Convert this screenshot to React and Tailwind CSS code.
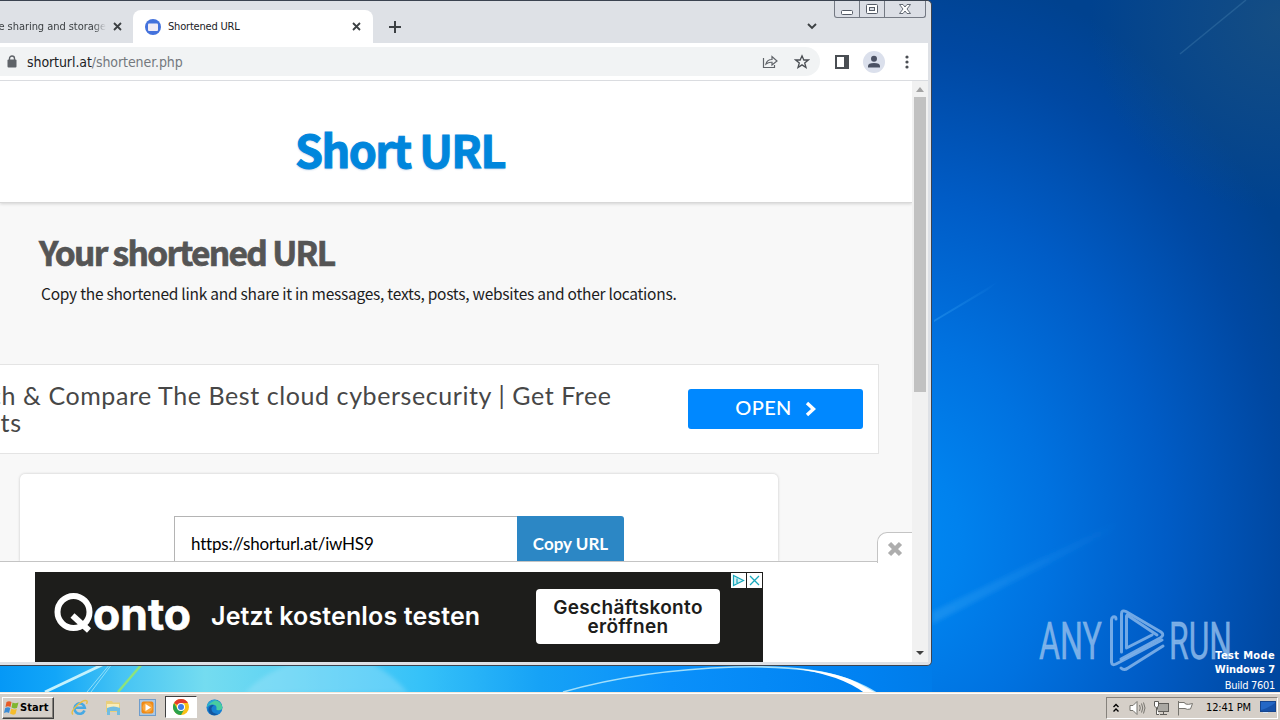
import React from "react";

const quickLaunch = [
  { id: "ie", icon: <IeIcon /> },
  { id: "explorer", icon: <FolderIcon /> },
  { id: "player", icon: <PlayerIcon /> },
  { id: "chrome", icon: <ChromeIcon />, active: true },
  { id: "edge", icon: <EdgeIcon /> },
];

function Wallpaper() {
  return (
    <svg className="absolute inset-0" width="1280" height="720" viewBox="0 0 1280 720">
      <defs>
        <radialGradient id="glow" gradientUnits="userSpaceOnUse" cx="0" cy="0" r="1" gradientTransform="translate(890 540) scale(460 580)">
          <stop offset="0" stopColor="#008af4" />
          <stop offset="0.15" stopColor="#0082ee" />
          <stop offset="0.35" stopColor="#0072e0" />
          <stop offset="0.6" stopColor="#005cc6" />
          <stop offset="0.85" stopColor="#0048a2" />
          <stop offset="1" stopColor="#00428f" />
        </radialGradient>
        <radialGradient id="corner" gradientUnits="userSpaceOnUse" cx="1280" cy="20" r="190">
          <stop offset="0" stopColor="#1a5080" stopOpacity="0.8" />
          <stop offset="1" stopColor="#1a5080" stopOpacity="0" />
        </radialGradient>
        <linearGradient id="strip">
          <stop offset="0" stopColor="#0598f6" />
          <stop offset="0.06" stopColor="#12a6f8" />
          <stop offset="0.13" stopColor="#46c4f4" />
          <stop offset="0.22" stopColor="#74dcf0" />
          <stop offset="0.32" stopColor="#5cd2f4" />
          <stop offset="0.45" stopColor="#36c2f8" />
          <stop offset="0.58" stopColor="#16a2f6" />
          <stop offset="0.72" stopColor="#0a90fa" />
          <stop offset="0.92" stopColor="#0082f2" />
          <stop offset="1" stopColor="#007ce9" />
        </linearGradient>
        <linearGradient id="ray" x1="0" x2="1" y1="1" y2="0">
          <stop offset="0" stopColor="#39a6f4" stopOpacity="0.4" />
          <stop offset="1" stopColor="#39a6f4" stopOpacity="0" />
        </linearGradient>
        <filter id="soft" x="-20%" y="-20%" width="140%" height="140%">
          <feGaussianBlur stdDeviation="2" />
        </filter>
      </defs>
      <rect width="1280" height="720" fill="url(#glow)" />
      <rect x="1000" width="280" height="260" fill="url(#corner)" />
      <rect y="664" width="932" height="29" fill="url(#strip)" />
      <path d="M932 612 L1120 520 L1110 532 L932 624Z" fill="url(#ray)" filter="url(#soft)" />
      <path d="M934 320 L1000 280 L988 290 L934 322Z" fill="url(#ray)" />
      <path d="M1246 0 L1180 54" stroke="#4a86b4" strokeOpacity="0.35" strokeWidth="1.5" />
      <path d="M45 692 L104 664" stroke="#c4f2fd" strokeWidth="3" />
      <path d="M87 692 L110 664 M91 692 L112 664" stroke="#90dffa" strokeWidth="1" />
      <path d="M118 692 L142 664" stroke="#8de37c" strokeWidth="2.5" />
      <path d="M245 693 Q262 674 290 664 L372 664 Q395 676 408 693Z" fill="#b5e9fb" fillOpacity="0.3" filter="url(#soft)" />
      <path d="M563 692 Q640 670 735 667 Q810 665 850 680 Q866 686 878 694" fill="none" stroke="#a2dffb" strokeWidth="1.600" />
      <path d="M790 668 Q835 671 858 683 L878 694 L866 694 Q840 674 790 668Z" fill="#fff" />
    </svg>
  );
}

function Watermark() {
  return (
    <svg className="absolute left-[1036px] top-[608px]" width="200" height="66" viewBox="1036 608 200 66">
      <g fill="#8fbcec" fillOpacity="0.85" stroke="#8fbcec" strokeOpacity="0.5" strokeWidth="0.9" fontFamily="'Liberation Sans Narrow', Roboto, sans-serif" fontSize="52">
        <text x="1039" y="659" textLength="63" lengthAdjust="spacingAndGlyphs">ANY</text>
        <text x="1169" y="659" textLength="63" lengthAdjust="spacingAndGlyphs">RUN</text>
      </g>
      <g fill="none" stroke="#8fbcec" strokeOpacity="0.8" strokeWidth="3" strokeLinejoin="round" strokeLinecap="round">
        <path d="M1116 619 Q1116 616 1113 617 Q1111.500 618 1111.500 620 V662 Q1112 666 1116 664 L1162 640" />
        <path d="M1121.500 652 V614 Q1121.500 609.500 1126 611.500 L1161 632 Q1165 635 1160 638 L1121 659" />
        <path d="M1127 615 L1157 635 M1126.500 616 V648 L1152 635 M1121 668 Q1124 671 1128 668 L1163 646" />
      </g>
    </svg>
  );
}

function WindowButtons() {
  return (
    <div className="flex h-[17px] w-[92px] rounded-b-[3px] border border-t-0 border-[#747983] bg-[#dbdee5]">
      <div className="flex w-[25px] items-center justify-center border-r border-[#747983]">
        <svg width="14" height="14" viewBox="0 0 14 14"><rect x="1.500" y="8.500" width="11" height="4" rx="1" fill="#fff" stroke="#555b66" /></svg>
      </div>
      <div className="flex w-[25px] items-center justify-center border-r border-[#747983]">
        <svg width="14" height="14" viewBox="0 0 14 14" fill="#fff" stroke="#555b66"><rect x="1.500" y="2.500" width="11" height="9" rx="1" /><rect x="4.500" y="5.500" width="5" height="3" fill="#dbdee5" /></svg>
      </div>
      <div className="flex flex-1 items-center justify-center">
        <svg width="14" height="14" viewBox="0 0 14 14"><path d="M1.500 2.500H5L7 5L9 2.500H12.500L9 7L12.500 11.500H9L7 9L5 11.500H1.500L5 7Z" fill="#fff" stroke="#555b66" strokeWidth="0.900" /></svg>
      </div>
    </div>
  );
}

function TabClose() {
  return (
    <svg width="9" height="9" viewBox="0 0 9 9"><path d="M1 1L8 8M8 1L1 8" stroke="#3c4043" strokeWidth="1.800" /></svg>
  );
}

function TabStrip() {
  return (
    <div className="flex h-[42px] shrink-0 bg-[#dee1e6] font-['DejaVu_Sans_Condensed','DejaVu_Sans',sans-serif] text-[11px] text-[#3c4043]">
      <div className="flex w-[133px] items-center pt-[9px]">
        <div className="flex w-[106px] justify-end overflow-hidden whitespace-nowrap pt-[1px] [mask-image:linear-gradient(to_right,black_88%,transparent)]">
          <span className="tracking-[-0.05px]">file sharing and storage</span><span className="w-[5px]" />
        </div>
        <span className="ml-[7px]"><TabClose /></span>
      </div>
      <div className="flex h-[33px] w-[240px] items-center self-end rounded-t-[8px] bg-white pl-[12px]">
        <svg width="16" height="16" viewBox="0 0 16 16"><circle cx="8" cy="8" r="8" fill="#4472dc" /><rect x="3" y="4.500" width="10" height="7.500" rx="1" fill="#f1ecf5" /></svg>
        <span className="ml-[7px] pt-[1px] tracking-[-0.2px] text-[#202124]">Shortened URL</span>
        <span className="ml-auto mr-[12px]"><TabClose /></span>
      </div>
      <div className="flex flex-1 items-center pl-[16px] pt-[9px]">
        <svg width="12" height="12" viewBox="0 0 12 12"><path d="M6 0V12M0 6H12" stroke="#3c4043" strokeWidth="2" /></svg>
      </div>
      <div className="flex w-[27px] items-center pt-[9px]">
        <svg width="10" height="7" viewBox="0 0 10 7"><path d="M1 1L5 5L9 1" fill="none" stroke="#3c4043" strokeWidth="1.900" /></svg>
      </div>
      <WindowButtons />
      <div className="w-[2px]" />
    </div>
  );
}

function Toolbar() {
  return (
    <div className="flex h-[38px] shrink-0 items-center border-b border-[#dadce0] bg-white">
      <div className="flex h-[29px] w-[820px] items-center rounded-r-full bg-[#f1f3f4] pl-[7px] pr-[10px]">
        <svg width="10" height="13" viewBox="0 0 10 13"><rect x="0.500" y="4.500" width="9" height="8" rx="1" fill="#5f6368" /><path d="M2.500 5V3.500A2.500 2.500 0 0 1 7.500 3.500V5" fill="none" stroke="#5f6368" strokeWidth="1.400" /></svg>
        <span className="ml-[10px] pt-[1px] font-['DejaVu_Sans_Condensed','DejaVu_Sans',sans-serif] text-[14px] tracking-[-0.08px] text-[#202124]">
          shorturl.at<span className="text-[#74797e]">/shortener.php</span>
        </span>
        <svg className="ml-auto" width="16" height="16" viewBox="0 0 16 16" fill="none" stroke="#5f6368" strokeWidth="1.200"><path d="M1.500 4V13.500H12.500V11" /><path d="M4 10Q5 5.500 10 5.500V2.500L15 7L10 11V8.300Q6.500 8 4 10Z" /></svg>
        <svg className="ml-[16px]" width="16" height="16" viewBox="0 0 16 16"><path d="M8 1.800L9.800 6H14.300L10.700 8.900L12 13.500L8 10.900L4 13.500L5.300 8.900L1.700 6H6.200Z" fill="none" stroke="#4a4e53" strokeWidth="1.300" /></svg>
      </div>
      <svg className="ml-[15px]" width="14" height="14" viewBox="0 0 14 14"><rect x="1" y="1" width="12" height="12" fill="#fff" stroke="#4a4e53" strokeWidth="2" /><path d="M9 0H14V14H9Z" fill="#4a4e53" /></svg>
      <svg className="ml-[14px]" width="22" height="22" viewBox="0 0 22 22"><circle cx="11" cy="11" r="11" fill="#dbe0ec" /><circle cx="11" cy="7.800" r="3" fill="#4b5163" /><path d="M5 16.500V15Q5 12 11 12T17 15V16.500Z" fill="#4b5163" /></svg>
      <svg className="ml-[19.500px]" width="4" height="14" viewBox="0 0 4 14" fill="#4a4e53"><circle cx="2" cy="2" r="1.600" /><circle cx="2" cy="7" r="1.600" /><circle cx="2" cy="12" r="1.600" /></svg>
    </div>
  );
}

function SearchAd() {
  return (
    <div className="mt-[59px] flex h-[90px] w-[879px] shrink-0 items-center border border-l-0 border-[#e4e4e4] bg-white pr-[15px]">
      <div className="-ml-[61px] w-[680px] whitespace-nowrap text-[25px] leading-[27px] tracking-[0.58px] text-[#474747]">
        <div>Search &amp; Compare The Best cloud cybersecurity | Get Free</div>
        <div>Results</div>
      </div>
      <div className="ml-auto flex h-[40px] w-[175px] items-center justify-center rounded-[3px] bg-[#0088ff] text-[20px] font-medium leading-[24px] tracking-[0.4px] text-white">
        <span className="pb-[4px]">OPEN</span>
        <svg className="ml-[13px]" width="11" height="16" viewBox="0 0 11 16"><path d="M2 2L8.500 8L2 14" fill="none" stroke="#fff" strokeWidth="3.400" /></svg>
      </div>
    </div>
  );
}

function ShortUrlCard() {
  return (
    <div className="ml-[20px] mt-[20px] flex h-[88px] w-[758px] shrink-0 items-end rounded-t-[5px] bg-white pl-[154px] shadow-[0_0_3px_rgba(0,0,0,0.2)]">
      <div className="flex h-[46px]">
        <div className="w-[343px] border border-b-0 border-r-0 border-[#b4b4b4] pl-[16px] pt-[15px] text-[17px] leading-[24px] tracking-[-0.2px] text-black">https://shorturl.at/iwHS9</div>
        <div className="w-[107px] rounded-tr-[3px] bg-[#2c87c5] pt-[16px] text-center text-[17px] font-bold leading-[24px] text-white">Copy URL</div>
      </div>
    </div>
  );
}

function BottomAd() {
  return (
    <div className="absolute bottom-0 left-0 h-[101px] w-full border-t border-[#c4c4c4] bg-white pl-[35px] pt-[10px]">
      <div className="absolute -top-[30px] right-0 flex h-[31px] w-[35px] items-center justify-center rounded-tl-[10px] border-l border-t border-[#c4c4c4] bg-white pt-[2px]">
        <svg width="16" height="16" viewBox="0 0 16 16"><path d="M2.500 2.500L13.500 13.500M13.500 2.500L2.500 13.500" stroke="#adadad" strokeWidth="4.500" /></svg>
      </div>
      <div className="relative flex h-[90px] w-[728px] items-center bg-[#1d1d1b] font-['Inter',sans-serif] text-white">
        <svg className="ml-[18px]" width="140" height="50" viewBox="0 0 140 50">
          <circle cx="20.500" cy="20" r="16" fill="none" stroke="#fff" strokeWidth="6" />
          <path d="M19.500 23.500L36 38.500" stroke="#fff" strokeWidth="6" />
          <text x="40" y="38" fill="#fff" stroke="#fff" strokeWidth="0.6" fontFamily="Inter, sans-serif" fontSize="43" fontWeight="700" textLength="98" lengthAdjust="spacingAndGlyphs">onto</text>
        </svg>
        <div className="ml-[18px] w-[300px] whitespace-nowrap text-[25px] font-semibold tracking-[0.14px]">Jetzt kostenlos testen</div>
        <div className="-mt-[2px] ml-[25px] flex h-[55px] w-[184px] flex-col items-center justify-center rounded-[4px] bg-white pt-[2px] text-[19px] font-semibold leading-[19px] tracking-[0.35px] text-[#1d1d1b]">
          <span>Geschäftskonto</span>
          <span>eröffnen</span>
        </div>
        <div className="absolute right-[1px] top-[1px] flex gap-[1px]">
          <svg width="15" height="15" viewBox="0 0 15 15"><rect width="15" height="15" fill="#fff" /><path d="M2.500 2.500V12.500L12.500 7.500ZM6 5.500V10" fill="#d4f1f4" stroke="#18a8bc" strokeWidth="1.200" /></svg>
          <svg width="15" height="15" viewBox="0 0 15 15"><rect width="15" height="15" fill="#fff" /><path d="M3 3L12 12M12 3L3 12" stroke="#18a8bc" strokeWidth="1.300" /></svg>
        </div>
      </div>
    </div>
  );
}

function Page() {
  return (
    <div className="relative flex h-[581px] w-[912px] flex-col overflow-hidden bg-[#f8f8f8] font-['Lato',sans-serif]">
      <div className="flex h-[122px] shrink-0 items-center border-b border-[#d8d8d8] bg-white pl-[295px] shadow-[0_1px_3px_rgba(0,0,0,0.15)]">
        <h1 className="mt-[14px] whitespace-nowrap font-['Noto_Sans_CJK_SC',sans-serif] text-[45px] font-bold leading-[50px] tracking-[-1.6px] text-[#0086dc] [-webkit-text-stroke:1px_#0086dc] [text-shadow:0_1px_2px_rgba(0,80,160,0.3)]">Short URL</h1>
      </div>
      <h2 className="ml-[39px] mt-[29px] whitespace-nowrap font-['Noto_Sans_CJK_SC',sans-serif] text-[33.5px] font-bold leading-[40px] tracking-[-1.7px] text-[#555] [-webkit-text-stroke:0.7px_#555]">Your shortened URL</h2>
      <p className="ml-[41px] mt-[10px] whitespace-nowrap font-['Noto_Sans_CJK_SC',sans-serif] text-[15.5px] leading-[23px] tracking-[-0.25px] text-[#1d1d1d]">
        Copy the shortened link and share it in messages, texts, posts, websites and other locations.
      </p>
      <SearchAd />
      <ShortUrlCard />
      <BottomAd />
    </div>
  );
}

function Scrollbar() {
  return (
    <div className="flex h-[581px] w-[16px] flex-col items-center bg-[#f1f1f1]">
      <div className="flex h-[16px] items-center"><svg width="8" height="5" viewBox="0 0 8 5"><path d="M0 5L4 0L8 5Z" fill="#a3a3a3" /></svg></div>
      <div className="h-[295px] w-[12px] bg-[#c1c1c1]" />
      <div className="mt-auto flex h-[17px] items-center"><svg width="8" height="5" viewBox="0 0 8 5"><path d="M0 0L4 4L8 0Z" fill="#404040" /></svg></div>
    </div>
  );
}

function BrowserWindow() {
  return (
    <div className="relative flex h-[666px] w-[932px] flex-col rounded-r-[5px] border-b border-r border-t border-[#3b4350] bg-[#dee1e6]">
      <div className="flex w-[928px] flex-1 flex-col">
        <TabStrip />
        <Toolbar />
        <div className="flex">
          <Page />
          <Scrollbar />
        </div>
      </div>
    </div>
  );
}

function IeIcon() {
  return (
    <svg width="17" height="17" viewBox="0 0 17 17" fill="none"><path d="M13.500 11.500A5.200 5.200 0 1 1 13.800 8.800H4.500" stroke="#47a9e4" strokeWidth="2.600" /><path d="M2 15.500Q-1 13 6 6.500T16 2Q16.500 3 15.500 5" stroke="#e9be44" strokeWidth="1.400" /></svg>
  );
}

function FolderIcon() {
  return (
    <svg width="17" height="17" viewBox="0 0 17 17"><path d="M1 2H7L8 3.500H15V13H1Z" fill="#e9cf7c" /><path d="M2 5H14V9H2Z" fill="#f9edb9" /><path d="M2 9Q8.500 6 15 9V16H12V12H5V16H2Z" fill="#72bde1" /></svg>
  );
}

function PlayerIcon() {
  return (
    <svg width="17" height="17" viewBox="0 0 17 17"><rect x="0.500" y="0.500" width="16" height="16" fill="#a9c8e5" stroke="#6e9dcc" /><rect x="2.500" y="2.500" width="12" height="12" rx="2" fill="#f08a16" /><circle cx="8.500" cy="8.500" r="5" fill="#f9a73c" /><path d="M6.500 5L12 8.500L6.500 12Z" fill="#fff" /></svg>
  );
}

function ChromeIcon() {
  return (
    <svg width="16" height="16" viewBox="0 0 16 16"><circle cx="8" cy="8" r="8" fill="#fbc116" /><path d="M8 8L1.070 4A8 8 0 0 1 14.930 4H8Z" fill="#e33b2e" /><path d="M1.070 4A8 8 0 0 0 8 16L11.500 10L8 8L4.500 10Z" fill="#2ba24c" /><circle cx="8" cy="8" r="4" fill="#fff" /><circle cx="8" cy="8" r="3" fill="#3f7de8" /></svg>
  );
}

function EdgeIcon() {
  return (
    <svg width="17" height="17" viewBox="0 0 17 17"><circle cx="8.500" cy="8.500" r="8" fill="#1780d2" /><path d="M1 6.500A8 8 0 0 1 16.500 9Q15.500 12 11 11Q10 10.500 10.500 9.500Q11 6 7 5.500Q3 5 1 8Z" fill="#48cda0" /><path d="M1 6.500Q4 0 10 .8Q5 3 1 8Z" fill="#28a6d6" /><path d="M5.500 9Q5 14.500 12 15Q8 17.500 4.500 15Q0.500 11 4 7Q6 5.500 8 6.500Q6 7 5.500 9Z" fill="#14559e" /></svg>
  );
}

function Taskbar() {
  return (
    <div className="relative flex h-[28px] items-center border-t border-[#f3e8da] bg-[#d5cfc8] font-['DejaVu_Sans_Condensed','DejaVu_Sans',sans-serif] text-[11px] text-black shadow-[inset_0_1px_0_#fff]">
      <div className="ml-[2px] mt-[2px] flex h-[22px] w-[52px] items-center border border-b-[#404040] border-l-white border-r-[#404040] border-t-white pl-[1px] shadow-[inset_-1px_-1px_0_#86827c]">
        <svg width="16" height="16" viewBox="0 0 16 16"><path d="M2.500 2Q5 0.500 7.500 2L6.500 7Q4 5.500 1.500 7Z" fill="#e75b27" /><path d="M8.500 2.500Q11 4 14.500 2.500L13 8Q10.500 9 7.500 7.500Z" fill="#80b62f" /><path d="M1.200 8Q4 6.500 6.300 8L5 13Q3 11.500 0 13Z" fill="#3c8cd6" /><path d="M7.300 8.500Q10 10 12.800 9L11.500 14Q9 15.500 6 13.500Z" fill="#f6bd2c" /></svg>
        <span className="pt-[1px] text-[11px] font-bold tracking-[0.1px]">Start</span>
      </div>
      <div className="ml-[8px] mt-[1px] flex">
        {quickLaunch.map((item) => (
          <div
            key={item.id}
            className={
              item.active
                ? "ml-[1px] flex h-[22px] w-[32px] items-center justify-center border border-b-white border-l-[#404040] border-r-white border-t-[#404040] bg-white"
                : "flex h-[22px] w-[34px] items-center justify-center"
            }
          >
            {item.icon}
          </div>
        ))}
      </div>
      <div className="ml-auto mr-[2px] mt-[2px] flex h-[22px] w-[172px] items-center border border-b-white border-l-[#86827c] border-r-white border-t-[#86827c]">
        <svg className="ml-[5px]" width="8" height="10" viewBox="0 0 8 10"><path d="M1.500 4L4 1.500L6.500 4M1.500 8.500L4 6L6.500 8.500" fill="none" stroke="#000" strokeWidth="1.400" /></svg>
        <svg className="ml-[9px]" width="17" height="16" viewBox="0 0 17 16" fill="none" stroke="#77756f"><path d="M1 5.500H4L8 1.500V14.500L4 10.500H1Z" fill="#fff" /><path d="M10.500 5Q12 8 10.500 11M12.500 3.500Q15 8 12.500 12.500M14.500 2.500Q17.500 8 14.500 13.500" /></svg>
        <svg className="ml-[7px]" width="16" height="16" viewBox="0 0 16 16" fill="#fff" stroke="#5f5d59"><rect x="4.500" y="3.500" width="11" height="8" fill="#aaa8a3" /><path d="M7 14.500H14M10.500 12V14.500M3.500 7V14.500H6" /><path d="M1.500 1.500H5.500V6L3.500 8L1.500 6Z" /></svg>
        <svg className="ml-[8px]" width="17" height="16" viewBox="0 0 17 16" fill="#fff" stroke="#77756f"><path d="M1.500 1V15.500M2 2.500H7Q8 2.500 8.500 4Q11 5 15.500 3.500L13.500 9Q10 10 8 8.500H2" /></svg>
        <span className="ml-[12px] whitespace-nowrap pt-[1px] tracking-[-0.15px]">12:41 PM</span>
        <svg className="ml-auto mr-[1px]" width="16" height="13" viewBox="0 0 16 13"><rect x="0.500" y="0.500" width="15" height="10" fill="#2467c5" stroke="#16458e" /><path d="M1 9Q7 8 15 2V10H1Z" fill="#1651a8" /><path d="M3 11.500H8" stroke="#d6e6f7" /></svg>
      </div>
    </div>
  );
}

const App = () => {
  return (
    <div className="relative flex h-[720px] w-[1280px] flex-col overflow-hidden">
      <Wallpaper />
      <div className="flex h-[692px] items-start">
        <BrowserWindow />
      </div>
      <Watermark />
      {/* Build info shown over the desktop */}
      <div className="absolute right-[5px] top-[649px] text-right font-['DejaVu_Sans_Condensed','DejaVu_Sans',sans-serif] text-[11px] leading-[14px] text-white">
        <div className="font-bold tracking-[0.35px]">Test Mode</div>
        <div className="font-bold tracking-[-0.05px]">Windows 7</div>
        <div className="mt-[2px] tracking-[-0.3px]">Build 7601</div>
      </div>
      <Taskbar />
    </div>
  );
};

export default App;
